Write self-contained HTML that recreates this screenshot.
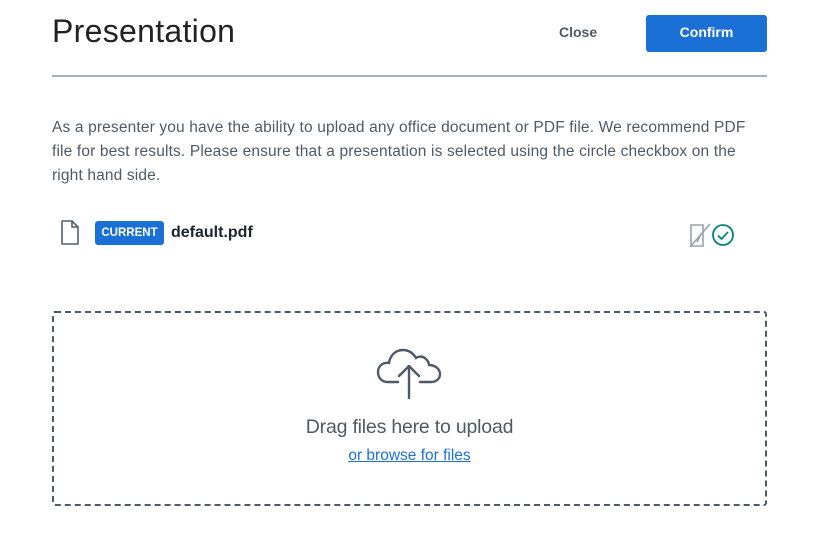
<!DOCTYPE html>
<html><head><style>
body{margin:0;width:816px;height:534px;background:#fff;font-family:"Liberation Sans",sans-serif;color:#4e5a66;position:relative;overflow:hidden}
.a{position:absolute}
</style></head><body>
<div class="a" style="left:52px;top:13px;font-size:32px;color:#222;letter-spacing:0.3px;">Presentation</div>
<div class="a" style="left:559px;top:24px;font-size:14px;font-weight:bold;color:#4e5a66;">Close</div>
<div class="a" style="left:646px;top:15px;width:121px;height:37px;background:#1b70d6;border-radius:3px;color:#fff;font-size:14px;font-weight:bold;text-align:center;line-height:35px;">Confirm</div>
<div class="a" style="left:52px;top:75px;width:715px;height:2px;background:#a7b3bd;"></div>
<div class="a" style="left:52px;top:116px;width:760px;font-size:15.5px;line-height:24px;color:#4e5a66;white-space:nowrap;letter-spacing:0.15px;">As a presenter you have the ability to upload any office document or PDF file. We recommend PDF<br>file for best results. Please ensure that a presentation is selected using the circle checkbox on the<br>right hand side.</div>
<svg class="a" style="left:60px;top:220px" width="20" height="26" viewBox="0 0 20 26"><path d="M2 1H12L18 7V24H2Z M12 1V7H18" fill="none" stroke="#555f6a" stroke-width="1.6" stroke-linejoin="round"/></svg>
<div class="a" style="left:95px;top:221px;width:69px;height:24px;background:#1b70d6;border-radius:3px;color:#fff;font-size:11.5px;font-weight:bold;text-align:center;line-height:24px;">CURRENT</div>
<div class="a" style="left:171px;top:224px;font-size:16px;font-weight:bold;color:#1c2530;">default.pdf</div>
<svg class="a" style="left:688px;top:222px" width="50" height="28" viewBox="0 0 50 28"><path d="M3 3H15V24H3Z" fill="none" stroke="#9aa3ab" stroke-width="1.6"/><path d="M2 25L22 2" stroke="#9aa3ab" stroke-width="1.6"/><path d="M9 20L13 12" stroke="#9aa3ab" stroke-width="1.6"/><circle cx="35" cy="13" r="10" fill="none" stroke="#00857a" stroke-width="1.8"/><path d="M30 13.5L33.5 17L40 10" fill="none" stroke="#00857a" stroke-width="1.8"/></svg>
<div class="a" style="left:52px;top:311px;width:711px;height:191px;border:2px dashed #4e5a66;border-radius:3px;"></div>
<svg class="a" style="left:376px;top:343px" width="66" height="56" viewBox="0 0 66 56"><path d="M22 39H12C5 39 2 34 2 29C2 23 7 19 13 20C14 12 20 7 27 7C33 7 37 10 40 15C43 13 47 13 50 16C52 18 53 20 53 22C59 22 64 26 64 31C64 36 60 39 55 39H44" fill="none" stroke="#4e5a66" stroke-width="2.4" stroke-linecap="round"/><path d="M33 56V23M23 33L33 23L43 33" fill="none" stroke="#4e5a66" stroke-width="2.4" stroke-linecap="round" stroke-linejoin="round"/></svg>
<div class="a" style="left:52px;top:416px;width:715px;text-align:center;font-size:19.5px;color:#4e5a66;letter-spacing:-0.2px;">Drag files here to upload</div>
<div class="a" style="left:52px;top:447px;width:715px;text-align:center;font-size:15.5px;color:#1b70d6;text-decoration:underline;">or browse for files</div>
</body></html>
